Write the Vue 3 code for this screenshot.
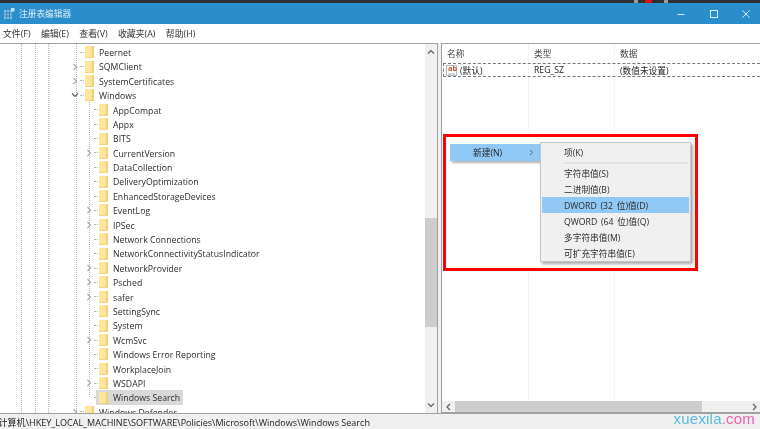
<script setup>
const rows = [
  { t: 'Peernet', d: 0 },
  { t: 'SQMClient', d: 0, c: 'r' },
  { t: 'SystemCertificates', d: 0, c: 'r' },
  { t: 'Windows', d: 0, c: 'd' },
  { t: 'AppCompat', d: 1 },
  { t: 'Appx', d: 1 },
  { t: 'BITS', d: 1 },
  { t: 'CurrentVersion', d: 1, c: 'r' },
  { t: 'DataCollection', d: 1 },
  { t: 'DeliveryOptimization', d: 1 },
  { t: 'EnhancedStorageDevices', d: 1 },
  { t: 'EventLog', d: 1, c: 'r' },
  { t: 'IPSec', d: 1, c: 'r' },
  { t: 'Network Connections', d: 1 },
  { t: 'NetworkConnectivityStatusIndicator', d: 1 },
  { t: 'NetworkProvider', d: 1, c: 'r' },
  { t: 'Psched', d: 1, c: 'r' },
  { t: 'safer', d: 1, c: 'r' },
  { t: 'SettingSync', d: 1 },
  { t: 'System', d: 1 },
  { t: 'WcmSvc', d: 1, c: 'r' },
  { t: 'Windows Error Reporting', d: 1 },
  { t: 'WorkplaceJoin', d: 1 },
  { t: 'WSDAPI', d: 1, c: 'r' },
  { t: 'Windows Search', d: 1, sel: true },
  { t: 'Windows Defender', d: 0, c: 'r' }
]
const menus = ['文件(F)', '编辑(E)', '查看(V)', '收藏夹(A)', '帮助(H)']
const guides = [21, 35, 48, 76]
const subItems = [
  { t: '字符串值(S)' },
  { t: '二进制值(B)' },
  { t: 'DWORD (32 位)值(D)', hot: true },
  { t: 'QWORD (64 位)值(Q)' },
  { t: '多字符串值(M)' },
  { t: '可扩充字符串值(E)' }
]
</script>

<template>
  <div class="win">
    <div class="topstrip"></div>
    <header class="title">
      <svg class="appicon" width="11" height="11" viewBox="0 0 11 11">
        <rect x="0" y="2" width="8" height="9" fill="#7cc4ea" />
        <path d="M2.7 2v9M5.4 2v9M0 5h8M0 8h8" stroke="#2a6ea8" stroke-width="0.7" />
        <rect x="7" y="0" width="3.5" height="3.5" fill="#bfe6f8" />
      </svg>
      <span class="title-text">注册表编辑器</span>
      <div class="caption">
        <svg width="12" height="12" viewBox="0 0 12 12"><path d="M2.5 6.5h7" stroke="#d7ebf7" stroke-width="1" /></svg>
        <svg width="12" height="12" viewBox="0 0 12 12"><rect x="2.5" y="2.5" width="7" height="7" fill="none" stroke="#d7ebf7" stroke-width="1" /></svg>
        <svg width="12" height="12" viewBox="0 0 12 12"><path d="M2.5 2.5l7 7M9.5 2.5l-7 7" stroke="#d7ebf7" stroke-width="1" /></svg>
      </div>
    </header>
    <nav class="menubar">
      <span v-for="m in menus" :key="m">{{ m }}</span>
    </nav>
    <main class="panes">
      <section class="tree">
        <div class="tree-scroll">
          <i v-for="g in guides" :key="g" class="guide" :style="{ left: g + 'px' }"></i>
          <i class="guide inner"></i>
          <div
            v-for="r in rows"
            :key="r.t"
            class="row"
            :class="'depth' + r.d"
          >
            <span class="exp">
              <svg v-if="r.c === 'r'" width="6" height="8" viewBox="0 0 6 8"><path d="M1.5 1L4.5 4 1.5 7" fill="none" stroke="#a6a6a6" stroke-width="1.1" /></svg>
              <svg v-else-if="r.c === 'd'" width="8" height="6" viewBox="0 0 8 6"><path d="M1 1.5L4 4.5 7 1.5" fill="none" stroke="#555" stroke-width="1.1" /></svg>
            </span>
            <span class="dash"></span>
            <span class="item" :class="{ sel: r.sel }">
              <svg class="folder" width="9" height="12" viewBox="0 0 9 12">
                <rect x="0" y="0" width="9" height="12" fill="#fde6a0" />
                <rect x="6.8" y="0" width="2.2" height="12" fill="#f5cf70" />
                <rect x="0" y="11" width="9" height="1" fill="#f3d27e" />
              </svg>
              <span class="label">{{ r.t }}</span>
            </span>
          </div>
        </div>
        <div class="vbar">
          <svg class="arr" width="8" height="6" viewBox="0 0 8 6"><path d="M1 4.5L4 1.5 7 4.5" fill="none" stroke="#606060" stroke-width="1.2" /></svg>
          <div class="vtrack"><div class="vthumb"></div></div>
          <svg class="arr" width="8" height="6" viewBox="0 0 8 6"><path d="M1 1.5L4 4.5 7 1.5" fill="none" stroke="#606060" stroke-width="1.2" /></svg>
        </div>
      </section>
      <section class="list">
        <div class="list-body">
          <div class="heads">
            <span class="c1">名称</span><span class="c2">类型</span><span class="c3">数据</span>
          </div>
          <div class="value-row">
            <span class="c1 first">
              <svg width="11" height="11" viewBox="0 0 11 11"><rect x="0.5" y="0.5" width="10" height="10" fill="#fbfbfb" stroke="#b8b8b8" /><rect x="2" y="8.5" width="7" height="1" fill="#9bb7d0" /></svg>
              <span class="abt">ab</span>
              (默认)
            </span>
            <span class="c2">REG_SZ</span>
            <span class="c3">(数值未设置)</span>
          </div>
          <div class="ctx-frame">
            <div class="menu-main">
              <span>新建(N)</span>
              <svg width="5" height="7" viewBox="0 0 5 7"><path d="M1 1l2.5 2.5L1 6" fill="none" stroke="#666" stroke-width="1" /></svg>
            </div>
            <div class="submenu">
              <div class="mi">项(K)</div>
              <div class="sep"></div>
              <div v-for="s in subItems" :key="s.t" class="mi" :class="{ hot: s.hot }">{{ s.t }}</div>
            </div>
          </div>
        </div>
        <div class="hbar">
          <svg width="7" height="8" viewBox="0 0 7 8"><path d="M5 1L2 4 5 7" fill="none" stroke="#606060" stroke-width="1.2" /></svg>
          <div class="htrack"><div class="hthumb"></div></div>
          <svg width="7" height="8" viewBox="0 0 7 8"><path d="M2 1l3 3-3 3" fill="none" stroke="#606060" stroke-width="1.2" /></svg>
        </div>
      </section>
    </main>
    <footer class="status">
      <span class="path">计算机\HKEY_LOCAL_MACHINE\SOFTWARE\Policies\Microsoft\Windows\Windows Search</span>
      <span class="mark"><span class="m1">xuexila</span><span class="m2">.com</span></span>
    </footer>
  </div>
</template>

<style>
html, body { margin: 0; background: #fff; overflow: hidden; }
</style>

<style scoped>
.win {
  width: 760px;
  height: 429px;
  display: flex;
  flex-direction: column;
  overflow: hidden;
  font-family: "Open Sans", "Noto Sans CJK SC", sans-serif;
  font-size: 8.7px;
  color: #222;
  background: #fff;
  filter: blur(0.3px);
}
.topstrip {
  height: 3px;
  flex: none;
  background: linear-gradient(to right, #2f2f33 0 634px, #999 634px 638px, #2f2f33 638px 645px, #e01010 645px 652px, #2f2f33 652px 664px, #999 664px 668px, #2f2f33 668px);
}
.title {
  height: 21px;
  flex: none;
  background: #2a8dcc;
  display: flex;
  align-items: center;
  padding-left: 4px;
  color: #d8ecf8;
  font-size: 8.7px;
}
.appicon { flex: none; }
.title-text { margin-left: 4px; }
.caption { margin-left: auto; display: flex; gap: 20.5px; padding-right: 8px; }
.menubar {
  height: 19px;
  flex: none;
  display: flex;
  align-items: center;
  gap: 10.4px;
  padding-left: 3px;
  color: #333;
  font-size: 8.9px;
}
.panes { flex: 1; display: flex; min-height: 0; background: #f0f0f0; }
.tree {
  width: 438px;
  flex: none;
  display: flex;
  background: #fff;
  border-top: 1px solid #a0a0a0;
  border-right: 1px solid #a0a0a0;
  box-sizing: border-box;
}
.tree-scroll { position: relative; flex: 1; overflow: hidden; padding-top: 1px; }
.guide {
  position: absolute;
  top: 0;
  bottom: 0;
  width: 0;
  border-left: 1px dotted #b4b4b4;
}
.guide.inner { left: 89px; top: 58px; bottom: 16px; }
.row {
  height: 14.4px;
  display: flex;
  align-items: center;
  position: relative;
}
.row.depth0 { padding-left: 71px; }
.row.depth1 { padding-left: 85px; }
.exp { width: 8px; display: flex; justify-content: center; flex: none; }
.dash { width: 4px; border-top: 1px dotted #b4b4b4; flex: none; margin-left: 1px; margin-right: -2px; }
.item { display: flex; align-items: center; height: 14.4px; padding: 0 1px 0 3px; position: relative; }
.item.sel { background: #d9d9d9; padding-right: 3px; }
.folder { flex: none; }
.label { margin-left: 5px; margin-top: 1.5px; white-space: nowrap; color: #2b2b2b; letter-spacing: 0.03px; }
.vbar {
  width: 12px;
  flex: none;
  background: #f0f0f0;
  display: flex;
  flex-direction: column;
  align-items: center;
  padding: 5px 0;
  box-sizing: border-box;
}
.arr { flex: none; }
.vtrack { flex: 1; width: 100%; padding-top: 163px; padding-bottom: 75px; box-sizing: border-box; display: flex; }
.vthumb { flex: 1; background: #cdcdcd; }
.list {
  flex: 1;
  margin-left: 3px;
  display: flex;
  flex-direction: column;
  background: #fff;
  border: 1px solid #a0a0a0;
  border-right: 0;
  box-sizing: border-box;
  min-width: 0;
}
.list-body { flex: 1; position: relative; min-height: 0; }
.heads { display: flex; height: 18px; align-items: center; color: #444; }
.heads .c1, .heads .c2, .heads .c3 { padding-left: 5px; }
.c1 { width: 87px; box-sizing: border-box; flex: none; }
.c2 { width: 86px; box-sizing: border-box; flex: none; }
.c3 { flex: 1; }
.heads .c1, .heads .c2 { border-right: 1px solid #e5e5e5; height: 18px; line-height: 20px; }
.heads .c3 { height: 18px; line-height: 20px; }
.list-body::before, .list-body::after {
  content: "";
  position: absolute;
  top: 0;
  bottom: 0;
  width: 1px;
  background: #eef5fb;
}
.list-body::before { left: 86px; }
.list-body::after { left: 172px; }
.value-row {
  display: flex;
  align-items: center;
  height: 12px;
  margin: 1px 0 0 1px;
  border: 1px dashed #777;
  border-right: 0;
  position: relative;
  z-index: 1;
}
.value-row .c1 { width: 86px; padding-left: 2px; display: flex; align-items: center; gap: 3px; position: relative; }
.value-row .c2 { padding-left: 4px; }
.value-row .c3 { padding-left: 4px; }
.abt { position: absolute; left: 4px; top: 1px; font-size: 7.5px; line-height: 7px; font-weight: 700; color: #d0552f; }
.ctx-frame {
  position: absolute;
  left: 1px;
  top: 90px;
  width: 255px;
  height: 137px;
  box-sizing: border-box;
  border: 3px solid #f00;
  z-index: 3;
  background: #fff;
}
.menu-main {
  position: absolute;
  left: 4px;
  top: 7px;
  width: 90px;
  height: 17px;
  background: #90c8f6;
  box-shadow: 2px 2px 2px rgba(0,0,0,0.3);
  display: flex;
  align-items: center;
  justify-content: space-between;
  padding: 0 6px 0 23px;
  box-sizing: border-box;
}
.submenu {
  position: absolute;
  left: 94px;
  top: 5px;
  width: 151px;
  height: 120px;
  background: #f0f0f0;
  border: 1px solid #c4c4c4;
  box-shadow: 2px 2px 3px rgba(0,0,0,0.35);
  box-sizing: border-box;
  padding: 1px;
}
.mi { height: 16px; line-height: 18px; padding-left: 22px; white-space: nowrap; color: #2b2b2b; word-spacing: 1.5px; }
.mi.hot { background: #90c8f6; }
.sep { height: 2px; margin: 2px 1px 1px 22px; background: #e2e2e2; }
.hbar {
  height: 11px;
  flex: none;
  background: #f0f0f0;
  display: flex;
  align-items: center;
  padding: 0 2px 0 3px;
}
.htrack { flex: 1; height: 100%; box-sizing: border-box; margin: 0 3px; }
.hthumb { width: 247px; height: 100%; background: #cdcdcd; }
.status {
  height: 15px;
  flex: none;
  background: #f0f0f0;
  border-top: 1px solid #a0a0a0;
  display: flex;
  align-items: center;
  position: relative;
  color: #222;
  overflow: hidden;
}
.path { margin-left: -1.5px; margin-top: 1.5px; white-space: nowrap; font-size: 9.05px; }
.mark { position: absolute; right: 5px; top: -3px; font-family: "Liberation Sans", sans-serif; font-size: 15px; line-height: 16px; letter-spacing: 0.2px; }
.m1 { color: #5bbbe0; }
.m2 { color: #f060a8; }
</style>
